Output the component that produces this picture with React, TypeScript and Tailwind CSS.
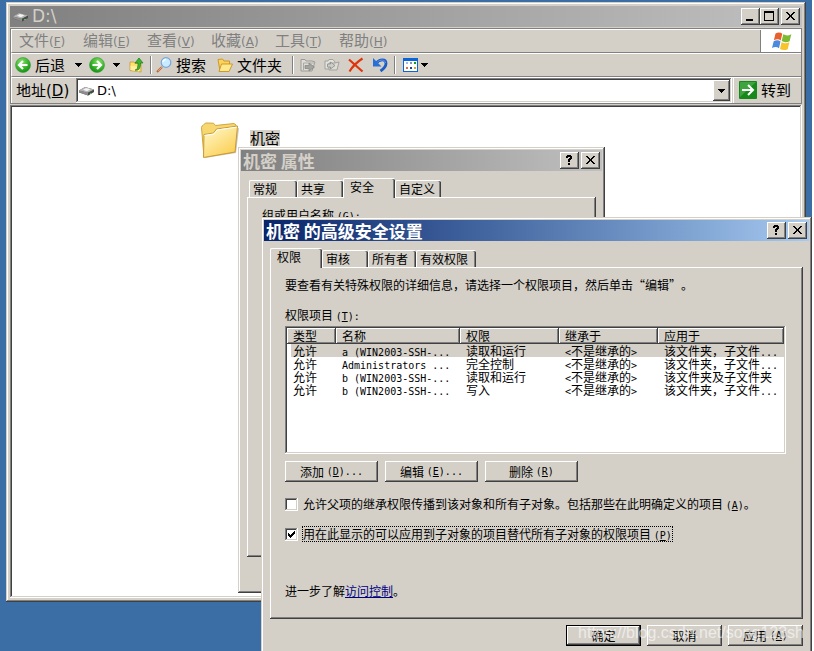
import type { ReactNode } from "react";

const menus = [
  { label: "文件", hotkey: "F" },
  { label: "编辑", hotkey: "E" },
  { label: "查看", hotkey: "V" },
  { label: "收藏", hotkey: "A" },
  { label: "工具", hotkey: "T" },
  { label: "帮助", hotkey: "H" },
];

const entries = [
  { name: "a (WIN2003-SSH-...", right: "读取和运行", scope: "该文件夹，子文件", more: true },
  { name: "Administrators ...", right: "完全控制", scope: "该文件夹，子文件", more: true },
  { name: "b (WIN2003-SSH-...", right: "读取和运行", scope: "该文件夹及子文件夹", more: false },
  { name: "b (WIN2003-SSH-...", right: "写入", scope: "该文件夹，子文件", more: true },
];

const windowFrame =
  "bg-[#d4d0c8] shadow-[inset_-1px_-1px_#404040,inset_1px_1px_#d4d0c8,inset_-2px_-2px_#808080,inset_2px_2px_#ffffff]";
const raised =
  "bg-[#d4d0c8] shadow-[inset_-1px_-1px_#404040,inset_1px_1px_#ffffff,inset_-2px_-2px_#808080]";
const sunken =
  "shadow-[inset_-1px_-1px_#ffffff,inset_1px_1px_#808080,inset_-2px_-2px_#d4d0c8,inset_2px_2px_#404040]";

/* half-width latin text inside the dialogs */
function Latin({ children }: { children: ReactNode }) {
  return (
    <span className="font-['DejaVu_Sans_Mono',monospace] text-[10px] leading-[0] whitespace-pre">
      {children}
    </span>
  );
}

function Hotkey({ k, after = "" }: { k: string; after?: string }) {
  return (
    <Latin>
      (<u>{k}</u>){after}
    </Latin>
  );
}

function DriveIcon() {
  return (
    <svg width="18" height="16" viewBox="0 0 18 16" className="shrink-0" aria-hidden="true">
      <path d="M1 7.500 7 4l9 2.500v2.500l-6 3.500-9-3z" fill="#5c5c5c" />
      <path d="M1 7.500 7 4l9 2.500-6.500 3.300z" fill="#b4b4b4" />
      <path d="M5 6.800 8 5l4.500 1.300-3.500 2z" fill="#f4f4f4" />
      <path d="M1 7.500v1.800l9 3.200v-2.700z" fill="#8d8d8d" />
      <path d="M10 10l6-3.300v2l-6 3.800z" fill="#4a4a4a" />
      <path d="M12 10.500h2" stroke="#4fc04f" />
    </svg>
  );
}

function ArrowDown() {
  return (
    <svg width="7" height="4" viewBox="0 0 7 4" className="shrink-0" shapeRendering="crispEdges" aria-hidden="true">
      <path d="M0 0h7v1H0zM1 1h5v1H1zM2 2h3v1H2zM3 3h1v1H3z" />
    </svg>
  );
}

function RoundArrow({ flip = false }: { flip?: boolean }) {
  return (
    <svg width="16" height="16" viewBox="0 0 16 16" className={flip ? "shrink-0 -scale-x-100" : "shrink-0"} aria-hidden="true">
      <defs>
        <radialGradient id="green" cx="0.4" cy="0.3" r="0.75">
          <stop offset="0" stopColor="#8be06c" />
          <stop offset="0.6" stopColor="#38b22c" />
          <stop offset="1" stopColor="#128a12" />
        </radialGradient>
      </defs>
      <circle cx="8" cy="8" r="7.500" fill="url(#green)" stroke="#3a9e3a" strokeWidth="0.6" />
      <path d="M12.500 8H4.500M8 4 4 8l4 4" fill="none" stroke="#fff" strokeWidth="2.200" />
    </svg>
  );
}

function UpFolderIcon() {
  return (
    <svg width="16" height="16" viewBox="0 0 16 16" className="shrink-0" aria-hidden="true">
      <path d="M1 5h4l1 1.500h6V15L1 13.500z" fill="#ffdf70" stroke="#c99a28" strokeWidth="0.8" />
      <path d="M1.500 8.500 10 10v4.500L1.500 13z" fill="#fff0a0" />
      <path d="M6 13c2.500 0 3-3 3-7H6l4-5 4 5h-2.500c0 5-1.500 8-5.500 7z" fill="#3fb52f" stroke="#1d7a17" strokeWidth="0.7" />
    </svg>
  );
}

function SearchIcon() {
  return (
    <svg width="16" height="16" viewBox="0 0 16 16" className="shrink-0" aria-hidden="true">
      <path d="M6 10 1 15" stroke="#b8693c" strokeWidth="2.200" />
      <path d="M6 10 2 14" stroke="#efb183" strokeWidth="0.8" />
      <circle cx="10" cy="5.500" r="4.800" fill="#c8ecff" stroke="#7aa5dc" strokeWidth="1.200" />
      <path d="M7 5a3 3 0 0 1 3-2.500" fill="none" stroke="#fff" strokeWidth="1.400" />
    </svg>
  );
}

function OpenFolderIcon() {
  return (
    <svg width="16" height="16" viewBox="0 0 16 16" className="shrink-0" aria-hidden="true">
      <path d="M1 2.500 5.500 2 7 4h5.500v4L3 14z" fill="#fbd25a" stroke="#c9921e" strokeWidth="0.9" />
      <path d="M4.500 7h11L12 14.500H2z" fill="#ffe98e" stroke="#c9921e" strokeWidth="0.9" />
    </svg>
  );
}

function MoveToIcon() {
  return (
    <svg width="16" height="16" viewBox="0 0 16 16" className="shrink-0" aria-hidden="true">
      <path d="M1 2.500h4l1 1.500h6l3 1-3 9H1z" fill="#dedcd6" stroke="#9a9a96" />
      <path d="M3.500 13V6H15" fill="none" stroke="#aaa9a4" />
      <path d="M5 8.500h4V6l5.500 4L9 14v-2.500H5z" fill="#a3a3a0" stroke="#83837f" strokeWidth="0.7" />
    </svg>
  );
}

function CopyToIcon() {
  return (
    <svg width="16" height="16" viewBox="0 0 16 16" className="shrink-0" aria-hidden="true">
      <path d="M1 4h3l1-1.500h4L11 5v7H1z" fill="#e4e2dd" stroke="#a2a29e" />
      <path d="M5 6h6l4-1-2 8H5z" fill="#dedcd6" stroke="#a2a29e" />
      <path d="M3.500 7h3V5l4.500 3.500L6.500 12v-2h-3z" fill="#cfcfca" stroke="#8c8c88" strokeWidth="0.8" />
    </svg>
  );
}

function DeleteIcon() {
  return (
    <svg width="16" height="16" viewBox="0 0 16 16" className="shrink-0" aria-hidden="true">
      <path d="M1 2.500 14.500 14.500M14.500 1.500C9 5 4.500 9.500 1.500 14.500" fill="none" stroke="#e0340a" strokeWidth="2.200" />
    </svg>
  );
}

function UndoIcon() {
  return (
    <svg width="16" height="16" viewBox="0 0 16 16" className="shrink-0" aria-hidden="true">
      <path d="M4 6.500C8 1.500 14 2 14 6.500c0 3-2.500 5.500-5.500 7.500" fill="none" stroke="#1c5cc4" strokeWidth="2.800" />
      <path d="M4 6.500C8 1.500 13.500 2.500 13.500 6" fill="none" stroke="#5a9cf0" strokeWidth="1" />
      <path d="M1 1v8.500h8.500z" fill="#2a6fd6" />
    </svg>
  );
}

function ViewsIcon() {
  return (
    <svg width="16" height="14" viewBox="0 0 16 14" className="shrink-0" shapeRendering="crispEdges" aria-hidden="true">
      <rect width="15" height="14" fill="#0a66d8" />
      <rect x="1" y="3" width="13" height="10" fill="#fff" />
      <path d="M3 4h2v2H3z" fill="#a9b4e8" />
      <path d="M7 4h2v2H7z" fill="#8a93a8" />
      <path d="M11 4h2v2h-2z" fill="#179a17" />
      <path d="M3 9h2v2H3z" fill="#e8683a" />
      <path d="M7 9h2v2H7z" fill="#173fa8" />
      <path d="M11 9h2v2h-2z" fill="#d8a51c" />
    </svg>
  );
}

function GoIcon() {
  return (
    <svg width="18" height="18" viewBox="0 0 18 18" className="shrink-0" aria-hidden="true">
      <rect width="18" height="18" rx="1" fill="#16881c" />
      <path d="M1 1h16L1 16z" fill="#58b858" opacity="0.6" />
      <path d="M3 9h10M9 4l5 5-5 5" fill="none" stroke="#fff" strokeWidth="2" />
    </svg>
  );
}

function WindowsLogo() {
  return (
    <svg width="20" height="19" viewBox="0 0 20 19" aria-hidden="true">
      <path d="M3.500 1.500C6 0 8.500.2 10.300 1.800L8.700 8.500C7 7 4.500 7 1.900 8.300z" fill="#e8602c" />
      <path d="M11.300 2.300c2.500 1.500 5 1.500 8-.1l-1.700 7c-2.800 1.300-5.500 1.300-7.900-.1z" fill="#7dba32" />
      <path d="M1.700 9.300c2.600-1.300 5-1.300 6.800.2L7 16.200C5 14.800 2.600 14.800 0 16z" fill="#4a8be0" />
      <path d="M9.500 10.200c2.400 1.400 5 1.400 7.900.1l-1.700 6.900c-2.600 1.300-5.300 1.200-7.700-.2z" fill="#f7c42c" />
    </svg>
  );
}

function FolderIcon() {
  return (
    <svg width="40" height="40" viewBox="0 0 40 40" className="shrink-0" aria-hidden="true">
      <defs>
        <linearGradient id="folder" x1="0" y1="0" x2="0.7" y2="1">
          <stop offset="0" stopColor="#fffbd0" />
          <stop offset="1" stopColor="#fbcf55" />
        </linearGradient>
      </defs>
      <path d="M5 37 36 32l3-25-3 1z" fill="#8c8c8c" opacity="0.5" />
      <path d="M1.500 6.500Q1.500 5 3 4.500L5.500 2l8 .2L15.500 4.500 34 2.500l2 1.500-2 27L4 36z" fill="#f7d870" stroke="#d0a63c" />
      <path d="M4 13.500 13.500 12l3-4L37.500 5l-2.500 26L3.500 36.500z" fill="url(#folder)" stroke="#c99c34" />
      <path d="M4.500 14.500 14 13l3-4L36.500 6.200" fill="none" stroke="#fff" />
    </svg>
  );
}

const glyphs = {
  min: "M5 11h7v2H5z",
  max: "M4 3h10v10H4zM5 5v7h8V5z",
  help: "M7 3h4v1h1v3h-1v1h-1v2H8V7h1V6h1V5H8v1H6V4h1zM8 11h2v2H8z",
  close:
    "M5 4h2v1H5zM12 4h2v1h-2zM6 5h2v1H6zM11 5h2v1h-2zM7 6h2v1H7zM10 6h2v1h-2zM8 7h3v2H8zM7 9h2v1H7zM10 9h2v1h-2zM6 10h2v1H6zM11 10h2v1h-2zM5 11h2v1H5zM12 11h2v1h-2z",
};

function CaptionButton({ kind, label }: { kind: keyof typeof glyphs; label: string }) {
  return (
    <button aria-label={label} className={`${raised} h-[17px] w-[19px]`}>
      <svg width="19" height="17" viewBox="0 0 19 17" shapeRendering="crispEdges" aria-hidden="true">
        <path d={glyphs[kind]} fillRule="evenodd" />
      </svg>
    </button>
  );
}

function Tab({ children, width, active = false }: { children: ReactNode; width: string; active?: boolean }) {
  return (
    <button
      role="tab"
      aria-selected={active}
      className={`${width} ${
        active ? "relative z-10 -mb-px h-5 pb-1 pl-[6px]" : "h-[17px] pl-[3px]"
      } flex items-center rounded-t-[2px] border-t border-l border-white bg-[#d4d0c8] leading-[14px] whitespace-nowrap shadow-[inset_-1px_0_#404040,inset_-2px_0_#808080]`}
    >
      {children}
    </button>
  );
}

function DialogTitle({ title, colors }: { title: string; colors: string }) {
  return (
    <div className={`${colors} flex h-[21px] items-center bg-linear-to-r pr-[2px] pl-[2px]`}>
      <h2 className="grow text-[17px] leading-5 font-bold">{title}</h2>
      <div className="flex gap-[2px]">
        <CaptionButton kind="help" label="帮助" />
        <CaptionButton kind="close" label="关闭" />
      </div>
    </div>
  );
}

function PushButton({ children, width, primary = false }: { children: ReactNode; width: string; primary?: boolean }) {
  return (
    <button
      className={`${width} ${raised} ${primary ? "border border-black" : ""} flex h-[21px] items-center justify-center`}
    >
      {children}
    </button>
  );
}

function CheckRow({ id, checked = false, children }: { id: string; checked?: boolean; children: ReactNode }) {
  return (
    <div className="flex items-center gap-1">
      <span className="relative size-[13px]">
        <input
          id={id}
          type="checkbox"
          defaultChecked={checked}
          className={`${sunken} peer block size-[13px] appearance-none bg-white`}
        />
        <svg
          viewBox="0 0 13 13"
          shapeRendering="crispEdges"
          aria-hidden="true"
          className="pointer-events-none absolute inset-0 hidden size-[13px] peer-checked:block"
        >
          <path d="M3 5h1v1h1v1h1V6h1V5h1V4h1V3h1v3H9v1H8v1H7v1H6v1H5V9H4V8H3z" />
        </svg>
      </span>
      <label
        htmlFor={id}
        className={`${checked ? "border-black" : "border-transparent"} border border-dotted leading-[14px] whitespace-nowrap`}
      >
        {children}
      </label>
    </div>
  );
}

function Separator() {
  return <div className="h-[18px] w-[2px] shrink-0 border-r border-l border-r-white border-l-[#808080]" />;
}

function Explorer() {
  return (
    <section className={`${windowFrame} absolute top-[2px] right-[6px] bottom-[49px] left-[6px] flex flex-col p-1`}>
      <div className="flex h-[21px] items-center bg-linear-to-r from-[#808080] to-[#c0c0c0] pr-[2px] pl-[2px]">
        <DriveIcon />
        <h1 className="ml-[2px] grow font-['DejaVu_Sans',sans-serif] text-[17px] leading-[21px] text-[#d4d0c8]">D:\</h1>
        <div className="flex">
          <CaptionButton kind="min" label="最小化" />
          <CaptionButton kind="max" label="最大化" />
          <div className="ml-[2px] flex">
            <CaptionButton kind="close" label="关闭" />
          </div>
        </div>
      </div>

      {/* menu, toolbar and address bands */}
      <div className="mt-px border border-[#808080] text-[15px] leading-5">
        <div className="flex h-6 border-t border-l border-white border-b border-b-[#808080]">
          <nav className="flex grow border-r border-[#808080] pb-[2px] pl-[7px] text-[#808080]">
            {menus.map((menu) => (
              <button key={menu.hotkey} className="flex w-16 items-center whitespace-nowrap">
                {menu.label}
                <span className="pt-[3px] font-['DejaVu_Sans',sans-serif] text-[12px]">
                  (<u>{menu.hotkey}</u>)
                </span>
              </button>
            ))}
          </nav>
          <div className="flex w-10 items-center justify-center border-l border-white bg-white">
            <WindowsLogo />
          </div>
        </div>

        <div className="flex h-6 items-center border-t border-l border-white border-b border-b-[#808080] pl-[3px]">
          <button className="flex w-[60px] items-center gap-1 pb-px">
            <RoundArrow />
            后退
          </button>
          <button aria-label="后退列表" className="w-[14px]">
            <ArrowDown />
          </button>
          <button aria-label="前进" className="w-6">
            <RoundArrow flip />
          </button>
          <button aria-label="前进列表" className="w-4">
            <ArrowDown />
          </button>
          <button aria-label="向上" className="w-[21px]">
            <UpFolderIcon />
          </button>
          <Separator />
          <button className="ml-1 flex w-[61px] items-center gap-1 pb-px">
            <SearchIcon />
            搜索
          </button>
          <button className="flex w-[75px] items-center gap-1 pb-px whitespace-nowrap">
            <OpenFolderIcon />
            文件夹
          </button>
          <Separator />
          <button aria-label="移至" className="ml-[6px] w-6">
            <MoveToIcon />
          </button>
          <button aria-label="复制到" className="w-6">
            <CopyToIcon />
          </button>
          <button aria-label="删除" className="w-6">
            <DeleteIcon />
          </button>
          <button aria-label="撤销" className="w-[22px]">
            <UndoIcon />
          </button>
          <Separator />
          <button aria-label="查看" className="ml-[7px] flex items-center gap-[2px]">
            <ViewsIcon />
            <ArrowDown />
          </button>
        </div>

        <div className="flex h-[26px] items-center border-t border-l border-white pl-1">
          <label htmlFor="address" className="w-[60px] font-['DejaVu_Sans','Noto_Sans_CJK_SC',sans-serif] whitespace-nowrap">
            地址(<u>D</u>)
          </label>
          <div className={`${sunken} flex h-[25px] grow items-center bg-white p-[2px]`}>
            <DriveIcon />
            <input
              id="address"
              defaultValue="D:\"
              className="ml-px w-0 grow font-['DejaVu_Sans',sans-serif] text-[13px] outline-none"
            />
            <button aria-label="地址列表" className={`${raised} flex h-[21px] w-[17px] items-center justify-center`}>
              <ArrowDown />
            </button>
          </div>
          <button className="ml-px flex h-full w-[68px] items-center gap-1 border-l border-white pb-px pl-[5px]">
            <GoIcon />
            转到
          </button>
        </div>
      </div>

      <main className={`${sunken} mt-px grow bg-white pt-4 pl-[190px]`}>
        <div className="flex items-center gap-[10px]">
          <FolderIcon />
          <span className="mb-[6px] bg-[#d4d0c8] text-[15px] leading-4">机密</span>
        </div>
      </main>
    </section>
  );
}

function PropertiesDialog() {
  return (
    <section className={`${windowFrame} absolute top-[147px] bottom-[58px] left-[238px] flex w-[367px] flex-col p-[3px]`}>
      <DialogTitle title="机密 属性" colors="from-[#808080] to-[#c0c0c0] text-[#d4d0c8]" />
      <div className="flex grow flex-col px-[6px] pt-[7px] pb-[33px]">
        <div role="tablist" className="flex items-end pl-[2px]">
          <Tab width="w-12">常规</Tab>
          <Tab width="w-[46px]">共享</Tab>
          <Tab width="w-[52px]" active>安全</Tab>
          <Tab width="w-[46px]">自定义</Tab>
        </div>
        <div className={`${raised} grow px-[15px] pt-[10px]`}>
          组或用户名称 <Hotkey k="G" after=":" />
        </div>
      </div>
    </section>
  );
}

function AdvancedDialog() {
  return (
    <section className={`${windowFrame} absolute top-[217px] right-0 left-[261px] p-[3px]`}>
      <DialogTitle title="机密 的高级安全设置" colors="from-[#0a246a] to-[#a6caf0] text-white" />
      <div className="px-[6px] pt-[7px] pb-2">
        <div role="tablist" className="flex items-end">
          <Tab width="w-[52px]" active>权限</Tab>
          <Tab width="w-[46px]">审核</Tab>
          <Tab width="w-12">所有者</Tab>
          <Tab width="w-[60px]">有效权限</Tab>
        </div>

        <div className={`${raised} px-[15px] pt-[10px] pb-5`}>
          <p>要查看有关特殊权限的详细信息，请选择一个权限项目，然后单击“编辑”。</p>
          <p id="entries" className="mt-[14px]">
            权限项目 <Hotkey k="T" after=":" />
          </p>

          <div className={`${sunken} mt-[3px] mr-[2px] h-32 bg-white p-[2px]`}>
            <table aria-labelledby="entries" className="w-full table-fixed border-separate border-spacing-0">
              <colgroup>
                <col className="w-[49px]" />
                <col className="w-[124px]" />
                <col className="w-[99px]" />
                <col className="w-[99px]" />
                <col />
              </colgroup>
              <thead>
                <tr>
                  {["类型", "名称", "权限", "继承于", "应用于"].map((head) => (
                    <th key={head} className={`${raised} h-4 p-0 pl-[6px] text-left leading-[14px] font-normal`}>
                      {head}
                    </th>
                  ))}
                </tr>
              </thead>
              <tbody>
                {entries.map((entry, i) => (
                  <tr key={i} className={i === 0 ? "bg-[#d4d0c8] leading-[13px]" : "leading-[13px]"}>
                    <td className="border-l-4 border-white p-0 pl-[2px]">允许</td>
                    <td className="p-0 pl-[6px] whitespace-nowrap">
                      <Latin>{entry.name}</Latin>
                    </td>
                    <td className="p-0 pl-[6px]">{entry.right}</td>
                    <td className="p-0 pl-[6px]">
                      <Latin>&lt;</Latin>不是继承的<Latin>&gt;</Latin>
                    </td>
                    <td className="p-0 pl-[6px] whitespace-nowrap">
                      {entry.scope}
                      {entry.more && <Latin>...</Latin>}
                    </td>
                  </tr>
                ))}
              </tbody>
            </table>
          </div>

          <div className="mt-[7px] flex gap-[7px]">
            <PushButton width="w-[93px]">
              添加&nbsp;<Hotkey k="D" after="..." />
            </PushButton>
            <PushButton width="w-[93px]">
              编辑&nbsp;<Hotkey k="E" after="..." />
            </PushButton>
            <PushButton width="w-[93px]">
              删除&nbsp;<Hotkey k="R" />
            </PushButton>
          </div>

          <div className="mt-[14px] flex flex-col gap-[14px]">
            <CheckRow id="inherit">
              允许父项的继承权限传播到该对象和所有子对象。包括那些在此明确定义的项目 <Hotkey k="A" />。
            </CheckRow>
            <CheckRow id="replace" checked>
              用在此显示的可以应用到子对象的项目替代所有子对象的权限项目 <Hotkey k="P" />
            </CheckRow>
          </div>

          <p className="mt-[41px]">
            进一步了解
            <a href="#" className="text-[#000080] underline">访问控制</a>。
          </p>
        </div>

        <div className="mt-[6px] flex justify-end gap-[6px]">
          <PushButton width="w-[75px]" primary>确定</PushButton>
          <PushButton width="w-[75px]">取消</PushButton>
          <PushButton width="w-[75px]">
            应用&nbsp;<Hotkey k="A" />
          </PushButton>
        </div>
      </div>
    </section>
  );
}

export default function App() {
  return (
    <div className="relative min-h-screen overflow-hidden border-r-2 border-white bg-[#3a6ea5] font-['Noto_Sans_CJK_SC',sans-serif] text-[12px] leading-4 text-black [text-spacing-trim:space-all]">
      <Explorer />
      <PropertiesDialog />
      <AdvancedDialog />
      <div className="pointer-events-none absolute right-2 bottom-2 font-['Liberation_Sans',sans-serif] text-[16px] leading-5 text-white/60">
        https://blog.csdn.net/song123sh
      </div>
    </div>
  );
}
